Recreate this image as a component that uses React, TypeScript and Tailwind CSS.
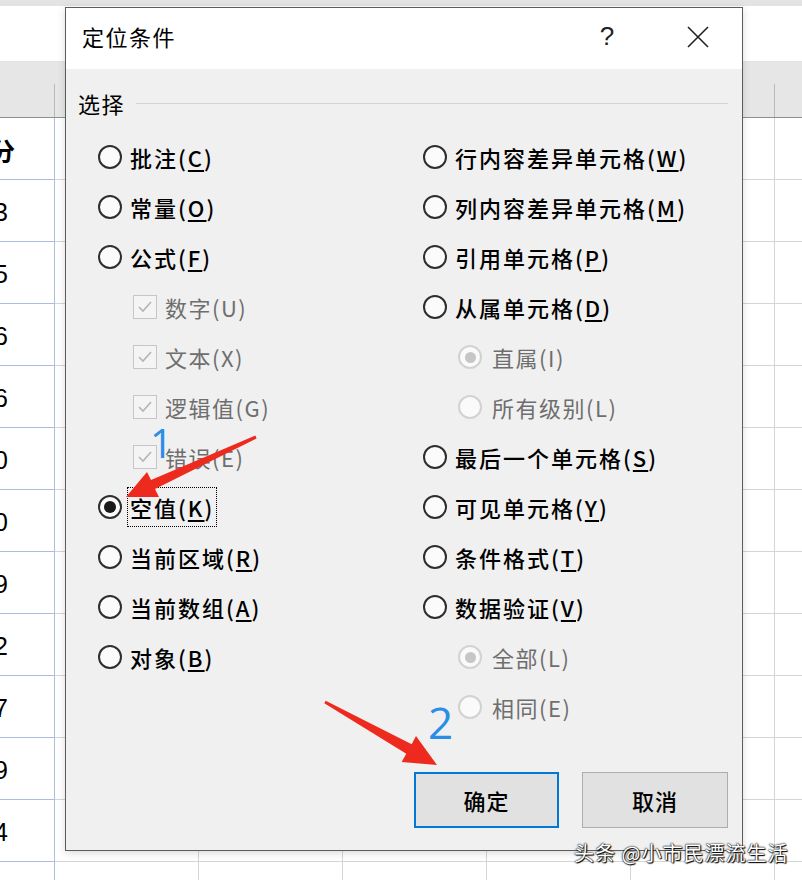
const cjk = "font-['Microsoft_YaHei','Noto_Sans_CJK_SC','Noto_Sans',sans-serif]";

type Item = {
  t: string;
  k: string;
  kind: "radio" | "check" | "subradio";
  checked?: boolean;
  focus?: boolean;
};

const leftItems: Item[] = [
  { t: "批注", k: "C", kind: "radio" },
  { t: "常量", k: "O", kind: "radio" },
  { t: "公式", k: "F", kind: "radio" },
  { t: "数字", k: "U", kind: "check" },
  { t: "文本", k: "X", kind: "check" },
  { t: "逻辑值", k: "G", kind: "check" },
  { t: "错误", k: "E", kind: "check" },
  { t: "空值", k: "K", kind: "radio", checked: true, focus: true },
  { t: "当前区域", k: "R", kind: "radio" },
  { t: "当前数组", k: "A", kind: "radio" },
  { t: "对象", k: "B", kind: "radio" },
];

const rightItems: Item[] = [
  { t: "行内容差异单元格", k: "W", kind: "radio" },
  { t: "列内容差异单元格", k: "M", kind: "radio" },
  { t: "引用单元格", k: "P", kind: "radio" },
  { t: "从属单元格", k: "D", kind: "radio" },
  { t: "直属", k: "I", kind: "subradio", checked: true },
  { t: "所有级别", k: "L", kind: "subradio" },
  { t: "最后一个单元格", k: "S", kind: "radio" },
  { t: "可见单元格", k: "Y", kind: "radio" },
  { t: "条件格式", k: "T", kind: "radio" },
  { t: "数据验证", k: "V", kind: "radio" },
  { t: "全部", k: "L", kind: "subradio", checked: true },
  { t: "相同", k: "E", kind: "subradio" },
];

const cells = ["分", "3", "5", "6", "6", "0", "0", "9", "2", "7", "9", "4", ""];

function Option({ item }: { item: Item }) {
  if (item.kind === "check") {
    return (
      <div className="flex h-[50px] items-center pl-[35px]">
        <span className="flex h-[24px] w-[24px] shrink-0 items-center justify-center border border-[#c6c6c6] bg-[#f4f4f4]">
          <svg width="18" height="18" viewBox="0 0 18 18">
            <polyline points="3,9 7,13 15,4" fill="none" stroke="#b4b4b4" strokeWidth="1.6" />
          </svg>
        </span>
        <span className="ml-[8px] text-[22px] tracking-[1.5px] text-[#6e6e6e]">
          {item.t}({item.k})
        </span>
      </div>
    );
  }
  if (item.kind === "subradio") {
    return (
      <div className="flex h-[50px] items-center pl-[35px]">
        <span className="flex h-[24px] w-[24px] shrink-0 items-center justify-center rounded-full border-2 border-[#d2d2d2] bg-[#fafafa]">
          {item.checked && <span className="h-[11px] w-[11px] rounded-full bg-[#c6c6c6]" />}
        </span>
        <span className="ml-[10px] text-[22px] tracking-[1.5px] text-[#6e6e6e]">
          {item.t}({item.k})
        </span>
      </div>
    );
  }
  return (
    <div className="flex h-[50px] items-center">
      <span className="flex h-[24px] w-[24px] shrink-0 items-center justify-center rounded-full border-2 border-[#2e2e2e] bg-[#fbfbfb]">
        {item.checked && <span className="h-[12px] w-[12px] rounded-full bg-[#1a1a1a]" />}
      </span>
      <span
        className={`ml-[5px] border px-[2px] py-[5px] text-[22px] font-medium leading-[28px] tracking-[2px] text-black ${
          item.focus ? "border-dotted border-black" : "border-transparent"
        }`}
      >
        {item.t}(<span className="underline underline-offset-[3px]">{item.k}</span>)
      </span>
    </div>
  );
}

export default function App() {
  return (
    <div className={`relative h-[880px] w-[802px] overflow-hidden bg-white ${cjk}`}>
      {/* spreadsheet behind */}
      <div className="flex h-full flex-col">
        <div className="h-[62px] shrink-0 border-t-[6px] border-b border-[#e3e3e3] bg-white" />
        <div className="flex h-[56px] shrink-0 border-b border-[#8f8f8f] bg-[#e6e6e6]">
          <div className="flex w-[55px] shrink-0 items-end">
            <div className="ml-auto h-[33px] border-r border-[#b9b9b9]" />
          </div>
          {[0, 1, 2, 3, 4, 5].map((c) => (
            <div key={c} className="flex w-[144px] shrink-0 items-end">
              <div className="ml-auto h-[33px] border-r border-[#b9b9b9]" />
            </div>
          ))}
        </div>
        {cells.map((v, i) => (
          <div key={i} className="flex h-[62px] shrink-0">
            <div className="flex w-[55px] shrink-0 items-center overflow-hidden border-r border-b border-[#a9bde2] pt-[4px]">
              <span
                className={
                  v === "分"
                    ? "-ml-[10px] text-[25px] font-bold text-black"
                    : "-ml-[6px] font-['Liberation_Sans',sans-serif] text-[25px] text-black"
                }
              >
                {v}
              </span>
            </div>
            {[0, 1, 2, 3, 4, 5].map((c) => (
              <div key={c} className="w-[144px] shrink-0 border-r border-b border-[#d5d5d5]" />
            ))}
          </div>
        ))}
      </div>

      {/* dialog */}
      <div className="absolute left-[65px] top-[7px] flex h-[844px] w-[678px] flex-col border border-[#5c5c5c] bg-[#f0f0f0] shadow-[0_2px_8px_rgba(0,0,0,0.15)]">
        <div className="flex h-[61px] shrink-0 items-center bg-white pb-[4px] pl-[16px] pr-[29px]">
          <span className="text-[22px] tracking-[1.5px] text-black">定位条件</span>
          <span className="ml-auto flex w-[30px] justify-center font-['Liberation_Sans',sans-serif] text-[26px] text-[#222]">
            ?
          </span>
          <span className="ml-[61px] flex w-[30px] justify-center">
            <svg width="24" height="24" viewBox="0 0 24 24">
              <path d="M2 2 L22 22 M22 2 L2 22" stroke="#222" strokeWidth="1.6" />
            </svg>
          </span>
        </div>

        <div className="flex flex-1 flex-col pl-[12px] pr-[14px]">
          <div className="mt-[19px] flex h-[30px] items-center">
            <span className="text-[22px] tracking-[1.5px] text-black">选择</span>
            <div className="ml-[11px] h-px flex-1 bg-[#d3d3d3]" />
          </div>

          <div className="mt-[14px] flex pl-[20px]">
            <div className="flex w-[325px] flex-col">
              {leftItems.map((it, i) => (
                <Option key={i} item={it} />
              ))}
            </div>
            <div className="flex flex-col">
              {rightItems.map((it, i) => (
                <Option key={i} item={it} />
              ))}
            </div>
          </div>

          <div className="mt-auto mb-[22px] flex justify-end gap-[23px]">
            <button className="flex h-[56px] w-[145px] items-center justify-center border-2 border-[#0078d7] bg-[#e1e1e1] text-[22px] font-medium tracking-[1px] text-black">
              确定
            </button>
            <button className="flex h-[56px] w-[146px] items-center justify-center border border-[#adadad] bg-[#e1e1e1] text-[22px] font-medium tracking-[1px] text-black">
              取消
            </button>
          </div>
        </div>
      </div>

      {/* annotations */}
      <svg className="pointer-events-none absolute inset-0" width="802" height="880" viewBox="0 0 802 880">
        <polygon
          points="126,497 147,472 151,480 255.4,435.6 256.6,438.4 155,489 159,497"
          fill="#ee2a1e"
        />
        <polygon
          points="437,765 416,736 411.7,744.2 325.7,700.7 324.3,703.3 406.3,753.8 401.6,762"
          fill="#ee2a1e"
        />
      </svg>
      <span className="pointer-events-none absolute left-[150px] top-[423px] font-['Open_Sans',sans-serif] text-[40px] leading-none text-[#2a8ee6]">
        1
      </span>
      <span className="pointer-events-none absolute left-[428px] top-[700px] font-['Open_Sans',sans-serif] text-[44px] leading-none text-[#2a8ee6]">
        2
      </span>
      <span className="pointer-events-none absolute left-[574px] top-[838px] text-[20px] tracking-[1px] text-white [text-shadow:0_0_2px_#000,0_0_1px_#000,1px_1px_1px_#000]">
        头条 @小市民漂流生活
      </span>
    </div>
  );
}
